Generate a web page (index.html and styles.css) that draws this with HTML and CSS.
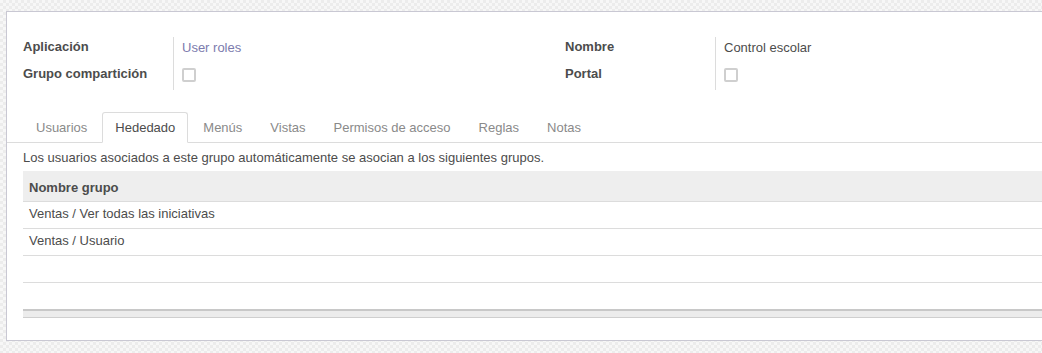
FILE: index.html
```html
<!DOCTYPE html>
<html lang="es">
<head>
<meta charset="utf-8">
<title>Grupo</title>
<link rel="stylesheet" href="styles.css">
</head>
<body>
<div class="sheet">
  <div class="groups">
    <div class="group">
      <div class="row">
        <div class="label">Aplicación</div>
        <div class="value"><span class="link">User roles</span></div>
      </div>
      <div class="row">
        <div class="label">Grupo compartición</div>
        <div class="value"><span class="checkbox"></span></div>
      </div>
    </div>
    <div class="group">
      <div class="row">
        <div class="label">Nombre</div>
        <div class="value">Control escolar</div>
      </div>
      <div class="row">
        <div class="label">Portal</div>
        <div class="value"><span class="checkbox"></span></div>
      </div>
    </div>
  </div>

  <ul class="tabs">
    <li class="tab">Usuarios</li>
    <li class="tab active">Hededado</li>
    <li class="tab">Menús</li>
    <li class="tab">Vistas</li>
    <li class="tab">Permisos de acceso</li>
    <li class="tab">Reglas</li>
    <li class="tab">Notas</li>
  </ul>

  <p class="desc">Los usuarios asociados a este grupo automáticamente se asocian a los siguientes grupos.</p>

  <div class="list">
    <div class="list-head">Nombre grupo</div>
    <div class="list-row">Ventas / Ver todas las iniciativas</div>
    <div class="list-row">Ventas / Usuario</div>
    <div class="list-row"></div>
    <div class="list-row last"></div>
    <div class="list-foot"></div>
  </div>
</div>
</body>
</html>
```

FILE: styles.css
```css
html, body {
  margin: 0;
  padding: 0;
}
body {
  width: 1042px;
  height: 353px;
  overflow: hidden;
  font-family: "Liberation Sans", Arial, Helvetica, sans-serif;
  font-size: 13px;
  line-height: 20px;
  color: #4c4c4c;
  background: repeating-conic-gradient(#ececec 0 25%, #f7f7f7 0 50%) 0 0 / 6px 6px;
}
.sheet {
  box-sizing: border-box;
  margin: 11px 0 0 6px;
  width: 1100px;
  height: 330px;
  background: #fff;
  border: 1px solid #c9c8d3;
  padding: 25px 0 22px 16px;
}
.groups {
  display: grid;
  grid-template-columns: 542px 1fr;
}
.row {
  display: flex;
  height: 26.5px;
}
.label {
  box-sizing: border-box;
  width: 151px;
  border-right: 1px solid #dcdcdc;
  font-weight: bold;
  color: #4c4c4c;
}
.value {
  padding-left: 8px;
  padding-top: 1px;
}
.link {
  color: #7c7bad;
}
.checkbox {
  display: block;
  box-sizing: border-box;
  width: 14px;
  height: 14px;
  margin-top: 3px;
  border: 2px solid #cfcfcf;
  border-radius: 2px;
  background: #fff;
}
.tabs {
  list-style: none;
  display: flex;
  gap: 2px;
  margin: 22px 0 0 -16px;
  padding: 0 0 0 16px;
  border-bottom: 1px solid #dcdcdc;
}
.tab {
  padding: 5px 12px 4px;
  border: 1px solid transparent;
  border-bottom: none;
  border-radius: 3px 3px 0 0;
  color: #8a8a8a;
}
.tab.active {
  color: #4c4c4c;
  background: #fff;
  border-color: #dcdcdc;
  border-bottom: 1px solid #fff;
  margin-bottom: -1px;
}
.desc {
  margin: 5px 0 3px;
}
.list-head {
  box-sizing: border-box;
  height: 31px;
  padding: 7px 6px 0;
  background: #eeeeee;
  border-bottom: 1px solid #dcdcdc;
  font-weight: bold;
}
.list-row {
  box-sizing: border-box;
  height: 27px;
  padding: 2px 6px 0;
  border-bottom: 1px solid #dcdcdc;
}
.list-row.last {
  height: 26px;
  border-bottom: none;
}
.list-foot {
  height: 6px;
  background: #ececec;
  border-top: 2px solid #c8c8c8;
  border-bottom: 1px solid #cfcfcf;
}
```
